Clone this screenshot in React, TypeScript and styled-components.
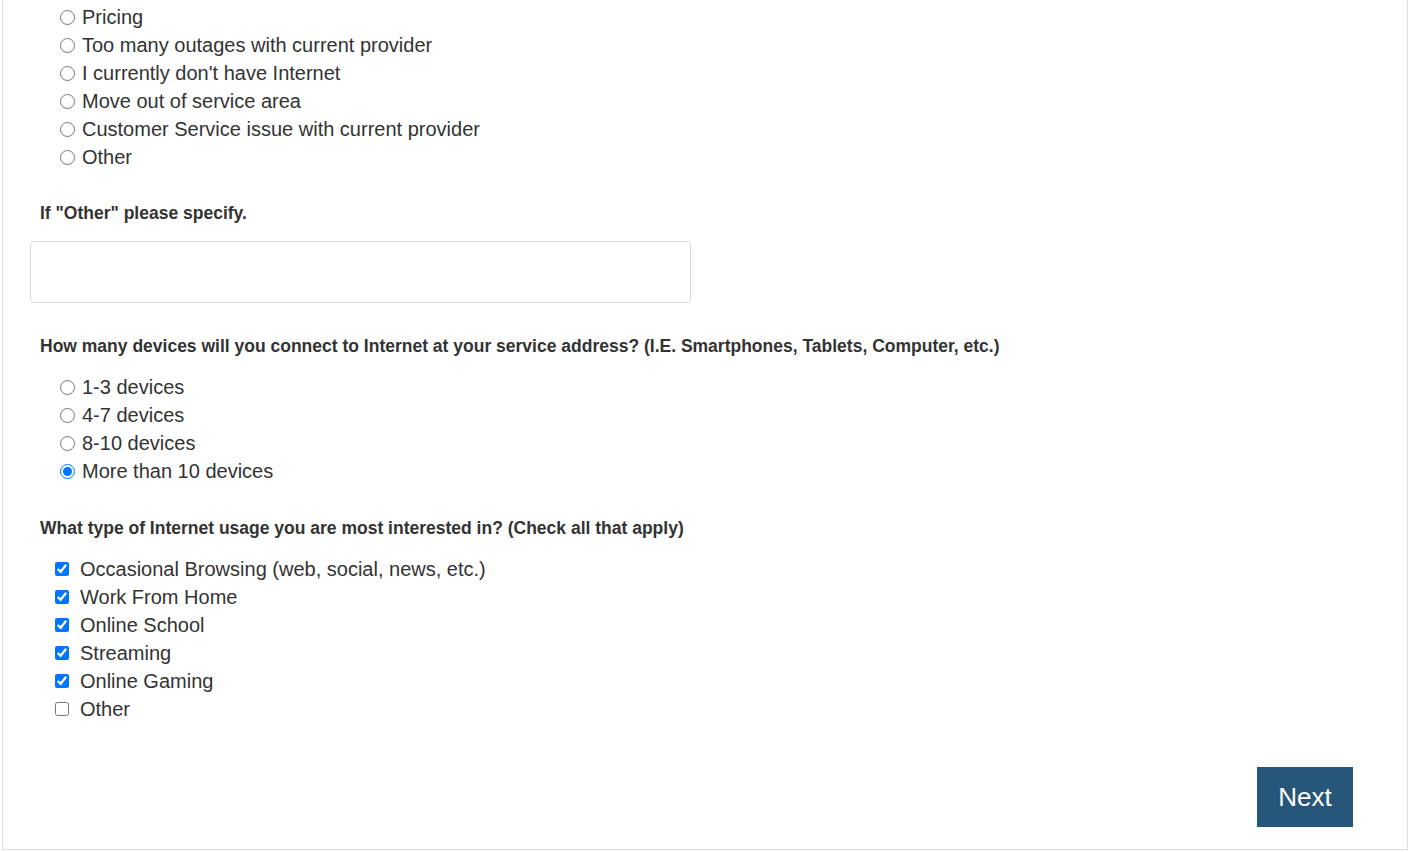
import React from "react";
import styled, { createGlobalStyle } from "styled-components";

const GlobalStyle = createGlobalStyle`
  html, body { margin: 0; padding: 0; background: #fff; }
  body { font-family: "Liberation Sans", Arial, sans-serif; color: #333; }
  * { box-sizing: border-box; }
`;

const Card = styled.div`
  margin: 0 3px 0 2px;
  border: 1px solid #ddd;
  border-top: none;
  background: #fff;
  padding: 3px 0 22px 27px;
  height: 850px;
`;

const OptionList = styled.div<{ $mt?: number; $indent: number }>`
  display: flex;
  flex-direction: column;
  margin-top: ${(p) => p.$mt ?? 0}px;
  padding-left: ${(p) => p.$indent}px;
`;

const Option = styled.label`
  display: flex;
  align-items: center;
  height: 28px;
  font-size: 20px;
  color: #333;
  cursor: pointer;
`;

const Radio = styled.input.attrs({ type: "radio" })`
  width: 15px;
  height: 15px;
  margin: 0 7px 0 0;
  flex: none;
`;

const Check = styled.input.attrs({ type: "checkbox" })`
  width: 14px;
  height: 14px;
  margin: 0 11px 0 0;
  flex: none;
`;

const Question = styled.div<{ $mt: number }>`
  margin-top: ${(p) => p.$mt}px;
  padding-left: 10px;
  font-size: 17.5px;
  font-weight: bold;
  line-height: 22px;
  color: #333;
`;

const TextInput = styled.input`
  display: block;
  margin-top: 17px;
  width: 661px;
  height: 62px;
  border: 1px solid #d9d9d9;
  border-radius: 4px;
  padding: 6px 12px;
  font-size: 16px;
  font-family: inherit;
  outline: none;
`;

const Footer = styled.div`
  display: flex;
  justify-content: flex-end;
  margin-top: 44px;
  padding-right: 54px;
`;

const NextButton = styled.button`
  width: 96px;
  height: 60px;
  border: none;
  border-radius: 0;
  background: #27567b;
  color: #fff;
  font-family: "Liberation Sans", Arial, sans-serif;
  font-size: 26px;
  cursor: pointer;
`;

const reasons = [
  "Pricing",
  "Too many outages with current provider",
  "I currently don't have Internet",
  "Move out of service area",
  "Customer Service issue with current provider",
  "Other",
];

const devices = ["1-3 devices", "4-7 devices", "8-10 devices", "More than 10 devices"];

const usages: [string, boolean][] = [
  ["Occasional Browsing (web, social, news, etc.)", true],
  ["Work From Home", true],
  ["Online School", true],
  ["Streaming", true],
  ["Online Gaming", true],
  ["Other", false],
];

export default function App() {
  return (
    <>
      <GlobalStyle />
      <Card>
        <OptionList $indent={30}>
          {reasons.map((r) => (
            <Option key={r}>
              <Radio name="reason" />
              {r}
            </Option>
          ))}
        </OptionList>
        <Question $mt={31}>If "Other" please specify.</Question>
        <TextInput type="text" />
        <Question $mt={32}>
          How many devices will you connect to Internet at your service address? (I.E. Smartphones, Tablets, Computer, etc.)
        </Question>
        <OptionList $mt={16} $indent={30}>
          {devices.map((d, i) => (
            <Option key={d}>
              <Radio name="devices" defaultChecked={i === 3} />
              {d}
            </Option>
          ))}
        </OptionList>
        <Question $mt={32}>What type of Internet usage you are most interested in? (Check all that apply)</Question>
        <OptionList $mt={16} $indent={25}>
          {usages.map(([u, c]) => (
            <Option key={u}>
              <Check defaultChecked={c} />
              {u}
            </Option>
          ))}
        </OptionList>
        <Footer>
          <NextButton>Next</NextButton>
        </Footer>
      </Card>
    </>
  );
}
